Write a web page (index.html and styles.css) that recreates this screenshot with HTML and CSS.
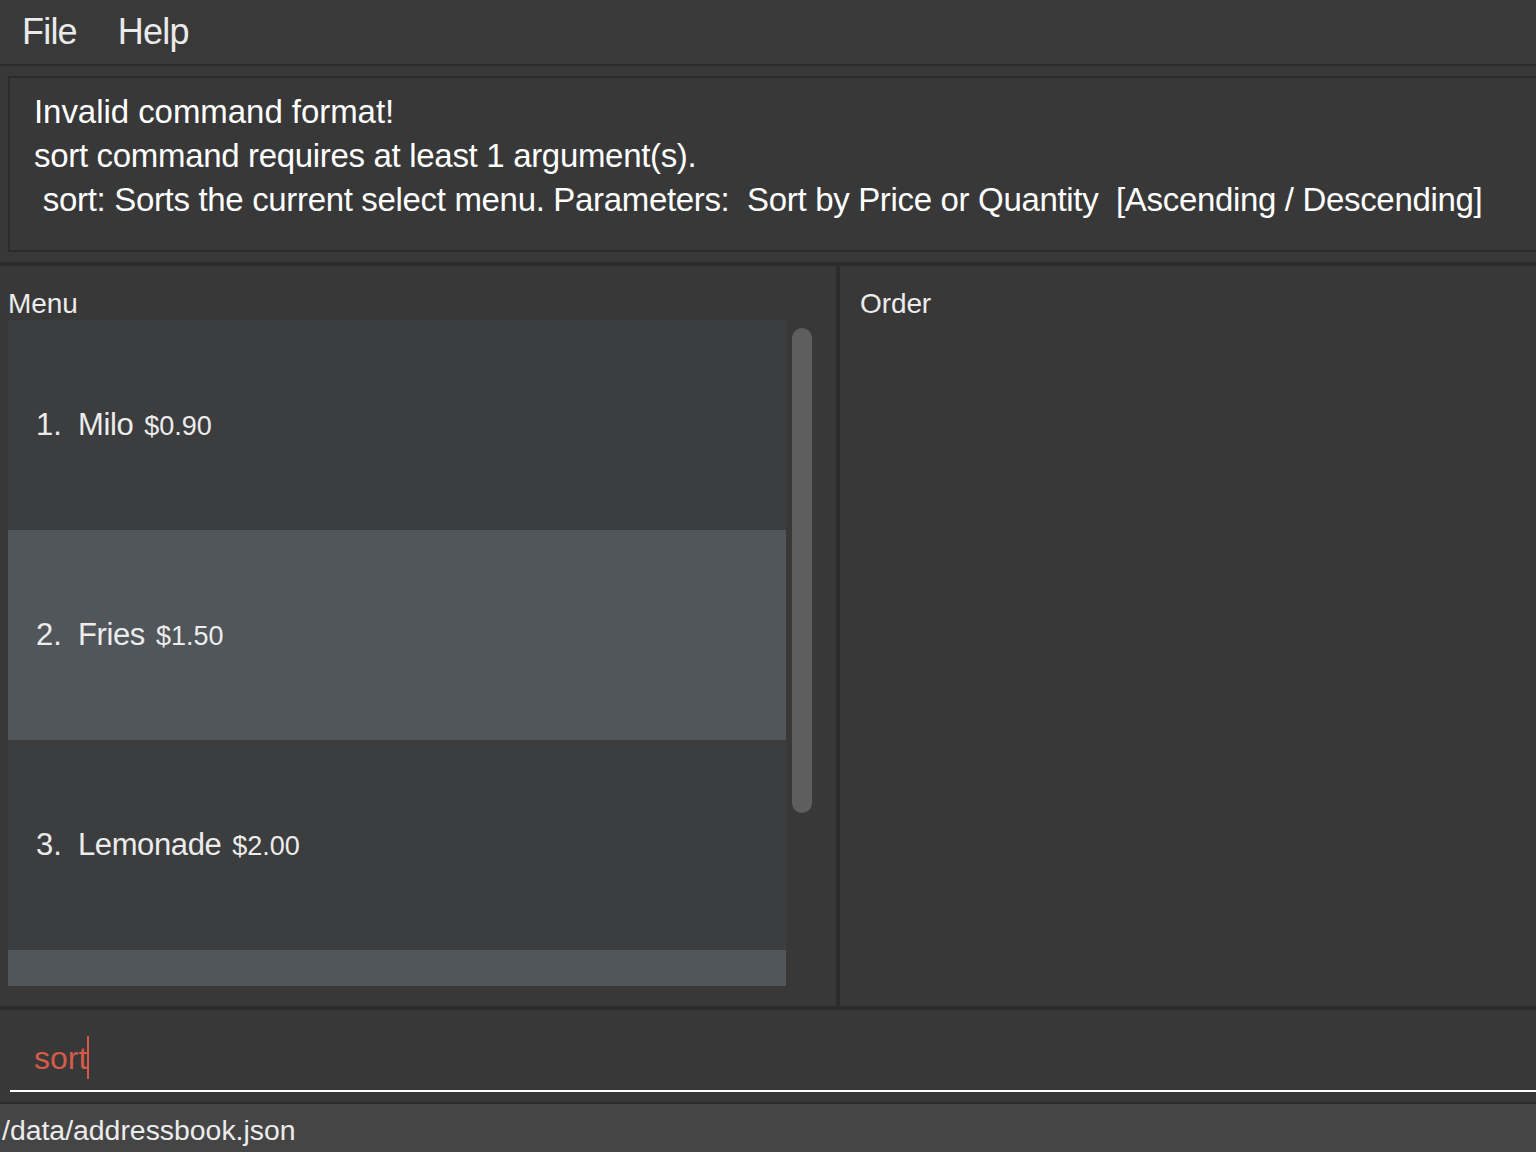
FILE: index.html
```html
<!DOCTYPE html>
<html>
<head>
<meta charset="utf-8">
<title>Menu</title>
<link rel="stylesheet" href="styles.css">
</head>
<body>
<div class="app">
  <div class="menubar">
    <span class="menu-item file">File</span>
    <span class="menu-item help">Help</span>
  </div>
  <div class="result-wrap">
    <div class="result-box">
      <div class="result-line first">Invalid command format!</div>
      <div class="result-line second">sort command requires at least 1 argument(s).</div>
      <div class="result-line usage"> sort: Sorts the current select menu. Parameters:  Sort by Price or Quantity  [Ascending / Descending]</div>
    </div>
  </div>
  <div class="panels">
    <div class="panel menu-panel">
      <div class="panel-label menu-label">Menu</div>
      <div class="list-row">
        <div class="list">
          <div class="cell">
            <span class="idx">1.</span><span class="name">Milo</span><span class="price">$0.90</span>
          </div>
          <div class="cell alt">
            <span class="idx">2.</span><span class="name">Fries</span><span class="price">$1.50</span>
          </div>
          <div class="cell">
            <span class="idx">3.</span><span class="name">Lemonade</span><span class="price">$2.00</span>
          </div>
          <div class="cell alt"></div>
        </div>
        <div class="track"><div class="thumb"></div></div>
      </div>
    </div>
    <div class="divider"></div>
    <div class="panel order-panel">
      <div class="panel-label order-label">Order</div>
    </div>
  </div>
  <div class="command-wrap">
    <div class="command-box">
      <div class="cmd-line">sort<span class="caret"></span></div>
    </div>
  </div>
  <div class="status-bar">/data/addressbook.json</div>
</div>
</body>
</html>
```
FILE: styles.css
```css
html, body {
  margin: 0;
  padding: 0;
  background: #383838;
  overflow: hidden;
}

.app {
  width: 1536px;
  height: 1152px;
  display: flex;
  flex-direction: column;
  font-family: "Liberation Sans", Arial, sans-serif;
  color: #ececec;
  overflow: hidden;
}

.menubar {
  height: 64px;
  border-bottom: 2px solid #2b2b2b;
  background: #393939;
  display: flex;
  align-items: flex-start;
  padding-left: 22px;
  flex-shrink: 0;
}

.menu-item {
  font-size: 36px;
  line-height: 64px;
  letter-spacing: -0.8px;
  color: #eaeaea;
}

.menu-item.help {
  margin-left: 41px;
}

.result-wrap {
  height: 200px;
  padding: 10px 0 0 8px;
  box-sizing: border-box;
  border-bottom: 4px solid #2b2b2b;
  flex-shrink: 0;
}

.result-box {
  height: 176px;
  margin-right: -20px;
  box-sizing: border-box;
  border: 2px solid #2b2b2b;
  padding: 12px 0 0 24px;
  background: #383838;
}

.result-line {
  font-size: 33px;
  line-height: 44px;
  letter-spacing: -0.2px;
  color: #ffffff;
  white-space: pre;
}

.result-line.first {
  letter-spacing: -0.05px;
}

.result-line.second {
  letter-spacing: -0.32px;
}

.result-line.usage {
  letter-spacing: -0.33px;
}

.panels {
  height: 740px;
  display: flex;
  flex-shrink: 0;
}

.panel {
  box-sizing: border-box;
  padding-top: 22px;
}

.menu-panel {
  width: 836px;
  padding-left: 8px;
}

.divider {
  width: 4px;
  background: #2b2b2b;
}

.order-panel {
  flex: 1;
  padding-left: 20px;
}

.panel-label {
  font-size: 28px;
  line-height: 32px;
  height: 32px;
  letter-spacing: -0.1px;
  color: #ececec;
}

.list-row {
  display: flex;
}

.list {
  width: 778px;
  height: 666px;
  overflow: hidden;
  background: #3c3d3f;
}

.cell {
  height: 210px;
  display: flex;
  align-items: baseline;
  padding: 0 0 0 28px;
  box-sizing: border-box;
  line-height: 210px;
  background: #3c3d3f;
}

.cell.alt {
  background: #51565a;
}

.idx {
  font-size: 31px;
  color: #ececec;
  width: 42px;
}

.name {
  font-size: 31px;
  letter-spacing: -0.4px;
  color: #ececec;
}

.price {
  font-size: 27px;
  color: #ececec;
  margin-left: 11px;
}

.track {
  width: 50px;
  padding: 8px 0 0 6px;
  box-sizing: border-box;
}

.thumb {
  width: 20px;
  height: 485px;
  border-radius: 10px;
  background: #5e5e5e;
}

.command-wrap {
  height: 92px;
  border-top: 4px solid #2b2b2b;
  border-bottom: 2px solid #2b2b2b;
  padding-left: 10px;
  box-sizing: content-box;
  flex-shrink: 0;
}

.command-box {
  height: 82px;
  padding: 26px 0 0 24px;
  box-sizing: border-box;
  border-bottom: 2px solid #ffffff;
}

.cmd-line {
  height: 40px;
  font-size: 32px;
  line-height: 40px;
  color: #d35c48;
  white-space: pre;
}

.caret {
  display: inline-block;
  width: 2px;
  height: 43px;
  background: #d35c48;
  vertical-align: -10px;
  margin-left: 0;
}

.status-bar {
  flex: 1;
  background: #454545;
  font-size: 28.4px;
  line-height: 48px;
  padding: 2px 0 0 2px;
  letter-spacing: 0;
  color: #ececec;
  overflow: hidden;
}
```
